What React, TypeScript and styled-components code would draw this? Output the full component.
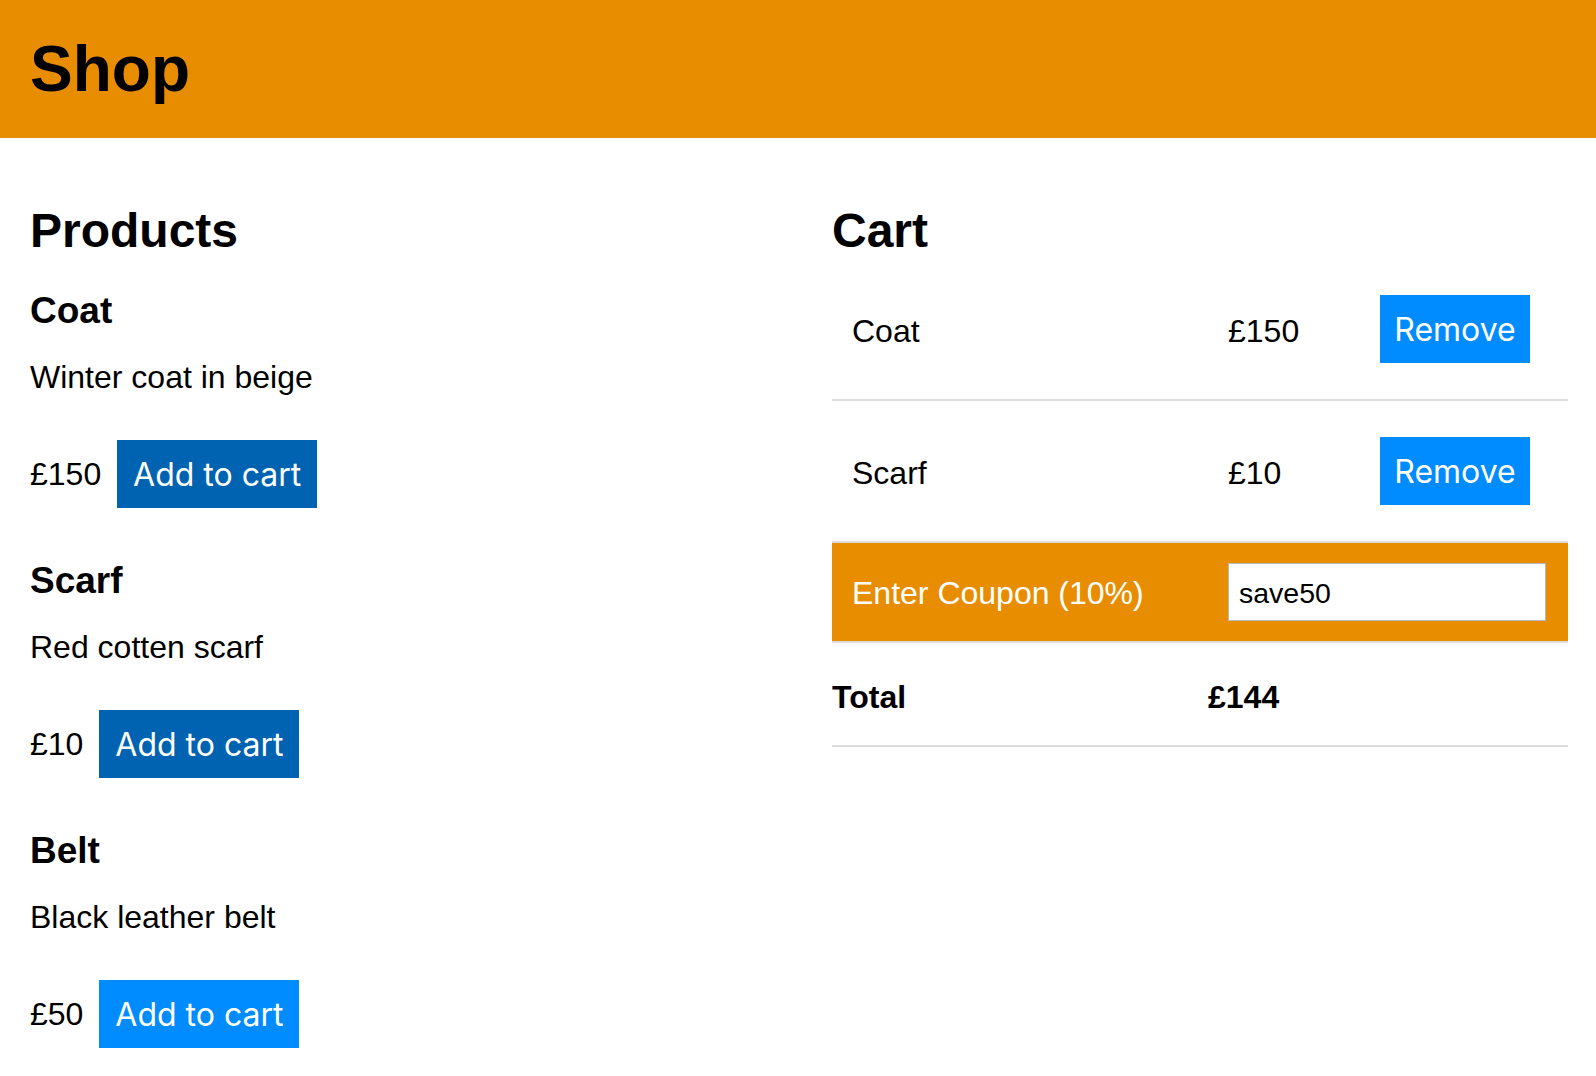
import React from "react";
import styled, { createGlobalStyle } from "styled-components";

const GlobalStyle = createGlobalStyle`
  html, body { margin: 0; padding: 0; background: #fff; }
  body {
    font-family: "Liberation Sans", Arial, Helvetica, sans-serif;
    font-size: 32px;
    color: #000;
  }
  * { box-sizing: border-box; }
`;

const ORANGE = "#e88d00";

const Header = styled.header`
  background: ${ORANGE};
  padding: 32px 30px;
  height: 138px;
`;

const Title = styled.h1`
  margin: 0;
  font-size: 64px;
  line-height: 74px;
  font-weight: 700;
`;

const Main = styled.main`
  display: grid;
  grid-template-columns: 1fr 1fr;
  column-gap: 66px;
  padding: 65px 28px 0 30px;
`;

const Column = styled.section`
  display: flex;
  flex-direction: column;
`;

const SectionTitle = styled.h2`
  margin: 0;
  font-size: 48px;
  line-height: 56px;
  font-weight: 700;
`;

const ProductList = styled.div`
  display: flex;
  flex-direction: column;
  gap: 52px;
  margin-top: 31px;
`;

const Product = styled.article`
  display: flex;
  flex-direction: column;
`;

const ProductName = styled.h3`
  margin: 0;
  font-size: 37px;
  line-height: 42px;
  font-weight: 700;
`;

const Description = styled.p`
  margin: 27px 0 0;
  font-size: 32px;
  line-height: 36px;
`;

const PriceRow = styled.div`
  display: flex;
  align-items: center;
  gap: 16px;
  margin-top: 45px;
  height: 68px;
`;

const Price = styled.span`
  font-size: 32px;
  line-height: 36px;
`;

const Button = styled.button<{ $tone: "dark" | "light"; $w: number }>`
  font-family: Inter, "Noto Sans", sans-serif;
  font-size: 32px;
  font-weight: 400;
  color: #fff;
  background: ${(p) => (p.$tone === "dark" ? "#0063b1" : "#008cff")};
  border: none;
  border-radius: 0;
  height: 68px;
  width: ${(p) => p.$w}px;
  padding: 0;
  display: flex;
  align-items: center;
  justify-content: center;
  cursor: pointer;
`;

const CartTable = styled.div`
  display: flex;
  flex-direction: column;
`;

const CartRow = styled.div<{ $h: number; $bg?: string }>`
  display: grid;
  grid-template-columns: 376px 152px 1fr;
  align-items: center;
  height: ${(p) => p.$h}px;
  background: ${(p) => p.$bg || "transparent"};
  border-bottom: 2px solid #dcdcdc;
  box-sizing: content-box;
`;

const Cell = styled.div<{
  $flush?: boolean;
  $bold?: boolean;
  $light?: boolean;
  $span?: number;
  $dy?: number;
}>`
  padding-left: ${(p) => (p.$flush ? 0 : 20)}px;
  padding-top: ${(p) => p.$dy || 0}px;
  font-size: 32px;
  line-height: 36px;
  font-weight: ${(p) => (p.$bold ? 700 : 400)};
  color: ${(p) => (p.$light ? "#fff" : "#000")};
  ${(p) => (p.$span ? `grid-column: span ${p.$span};` : "")}
`;

const CouponInput = styled.input`
  display: block;
  width: 318px;
  height: 58px;
  border: 1px solid #b8b8b8;
  background: #fff;
  padding: 2px 10px 0;
  font-family: "Liberation Sans", Arial, sans-serif;
  font-size: 28.5px;
  color: #000;
  outline: none;
`;

const products = [
  { name: "Coat", desc: "Winter coat in beige", price: 150, inCart: true },
  { name: "Scarf", desc: "Red cotten scarf", price: 10, inCart: true },
  { name: "Belt", desc: "Black leather belt", price: 50, inCart: false },
];

export default function App() {
  const cart = products.filter((p) => p.inCart);
  const subtotal = cart.reduce((s, p) => s + p.price, 0);
  const total = Math.round(subtotal * 0.9);
  return (
    <>
      <GlobalStyle />
      <Header>
        <Title>Shop</Title>
      </Header>
      <Main>
        <Column>
          <SectionTitle>Products</SectionTitle>
          <ProductList>
            {products.map((p) => (
              <Product key={p.name}>
                <ProductName>{p.name}</ProductName>
                <Description>{p.desc}</Description>
                <PriceRow>
                  <Price>£{p.price}</Price>
                  <Button $tone={p.inCart ? "dark" : "light"} $w={200}>
                    Add to cart
                  </Button>
                </PriceRow>
              </Product>
            ))}
          </ProductList>
        </Column>
        <Column>
          <SectionTitle>Cart</SectionTitle>
          <CartTable>
            {cart.map((p) => (
              <CartRow key={p.name} $h={140}>
                <Cell $dy={3}>{p.name}</Cell>
                <Cell $dy={3}>£{p.price}</Cell>
                <Cell>
                  <Button $tone="light" $w={150}>
                    Remove
                  </Button>
                </Cell>
              </CartRow>
            ))}
            <CartRow $h={98} $bg={ORANGE}>
              <Cell $light $dy={2}>
                Enter Coupon (10%)
              </Cell>
              <Cell $span={2}>
                <CouponInput defaultValue="save50" />
              </Cell>
            </CartRow>
            <CartRow $h={102}>
              <Cell $flush $bold $dy={5}>
                Total
              </Cell>
              <Cell $flush $bold $dy={5}>
                £{total}
              </Cell>
              <Cell />
            </CartRow>
          </CartTable>
        </Column>
      </Main>
    </>
  );
}
